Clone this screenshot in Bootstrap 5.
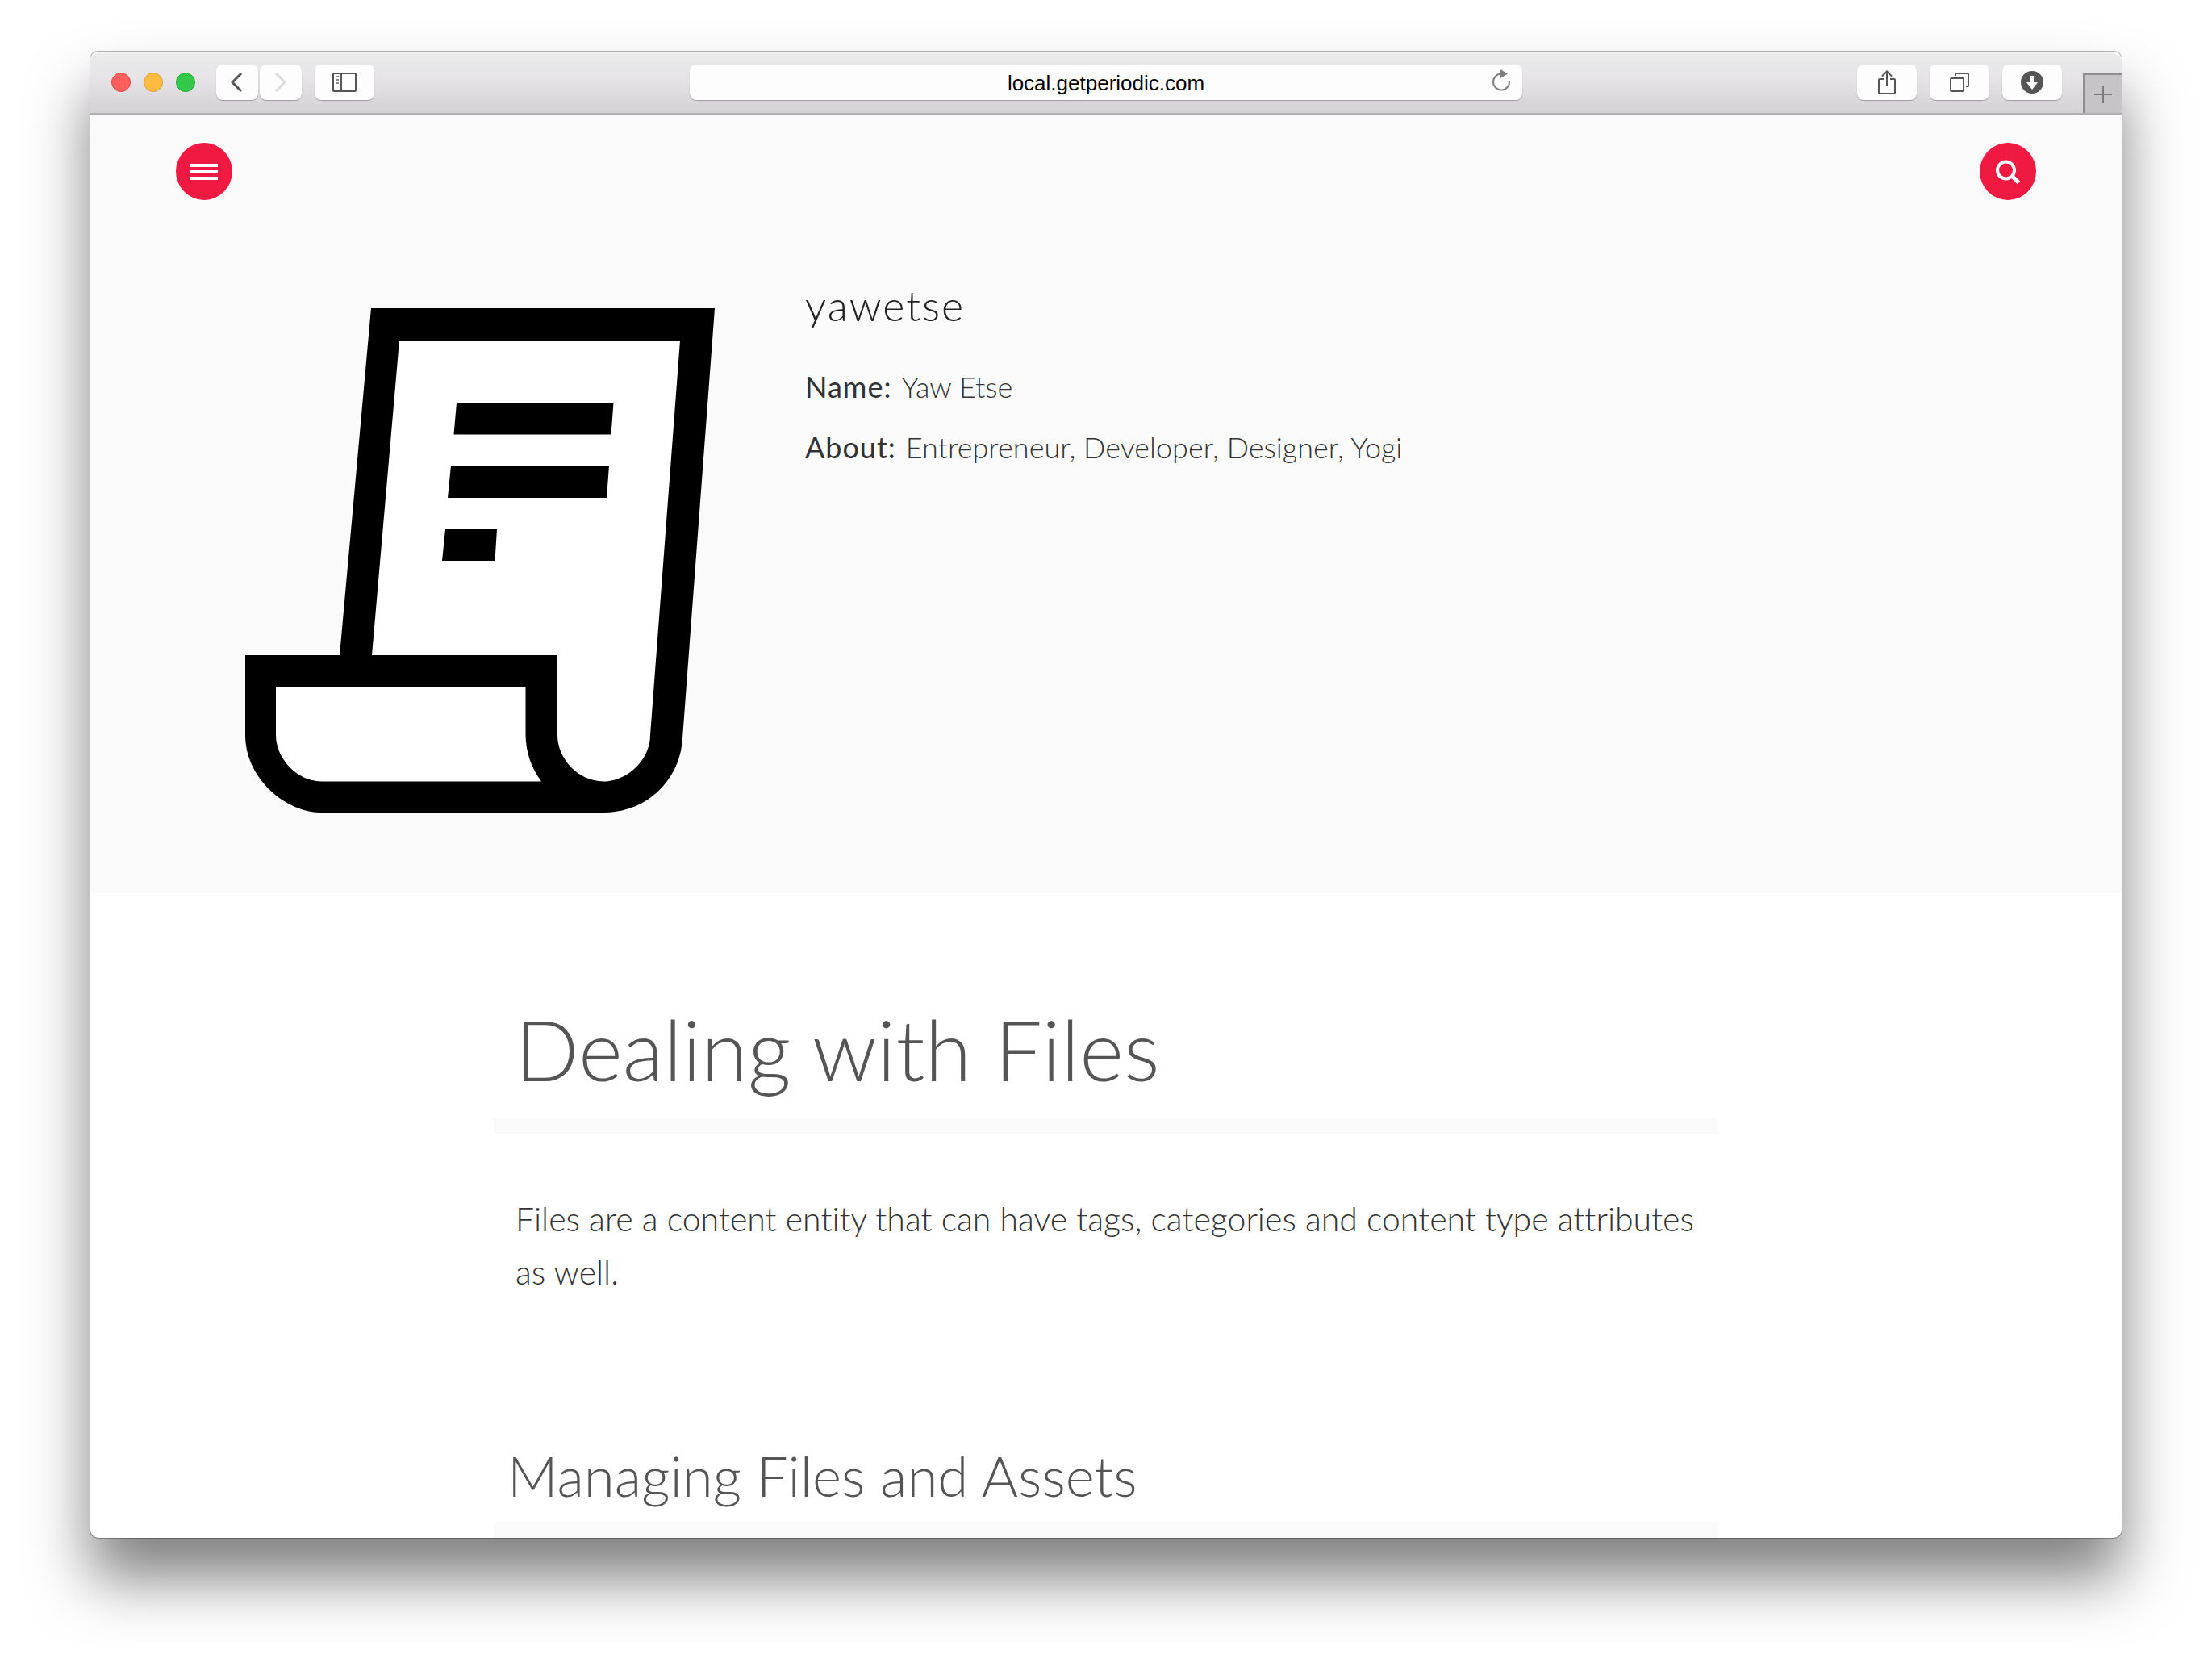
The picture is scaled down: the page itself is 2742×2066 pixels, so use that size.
<!DOCTYPE html>
<html lang="en">
<head>
<meta charset="utf-8">
<meta name="viewport" content="width=device-width, initial-scale=1">
<title>Dealing with Files</title>
<link href="https://cdn.jsdelivr.net/npm/bootstrap@5.3.0/dist/css/bootstrap.min.css" rel="stylesheet">
<style>
body { background: #fff; font-family: Lato, sans-serif; font-weight: 300; font-variant-ligatures: none; color: #333; padding: 64px 112px 160px; }
.browser { border-radius: 10px; box-shadow: 0 0 0 1px rgba(0,0,0,.3), 0 50px 75px rgba(0,0,0,.5); background: #fff; }
.toolbar { height: 78px; background: linear-gradient(#ececec, #e5e3e6 45%, #d4d2d5); border-bottom: 2px solid #b0aeb0; border-radius: 10px 10px 0 0; box-shadow: inset 0 2px 0 #f6f6f6; }
.toolside { flex: 1 1 0; height: 76px; }
.lights { gap: 16px; padding: 0 26px; }
.light { width: 24px; height: 24px; border-radius: 50%; border: 1px solid; }
.light-close { background: #fc605c; border-color: #df4744; }
.light-min { background: #fdbc40; border-color: #de9f34; }
.light-max { background: #34c84a; border-color: #27aa35; }
.tool { width: 74px; height: 44px; padding: 0; border: 0; border-radius: 8px; background: #fdfdfd; box-shadow: 0 1px 1px rgba(0,0,0,.28); display: flex; align-items: center; justify-content: center; }
.tool-narrow { width: 52px; }
.history { gap: 2px; }
.address { width: 41%; }
.address input { height: 44px; width: 100%; border: 0; border-radius: 8px; background: #fdfdfd; box-shadow: 0 1px 1px rgba(0,0,0,.28); text-align: center; color: #000; font: 26px/44px "Liberation Sans", Arial, sans-serif; padding: 2px 40px 0; }
.reload { position: absolute; right: 14px; top: 6px; border: 0; background: none; padding: 0; line-height: 0; }
.newtab { width: 48px; height: 49px; margin-left: 26px; padding: 0; border: solid #8f8d8f; border-width: 2px 0 0 2px; background: #c6c4c6; line-height: 0; }
.masthead { background: #fafafa; padding-bottom: 100px; }
.topnav { padding: 35px 106px 0; }
.round { width: 70px; height: 71px; border: 0; padding: 0; border-radius: 50%; background: #f01941; display: flex; align-items: center; justify-content: center; }
.profile { padding: 100px 106px 0 191px; gap: 112px; }
.avatar { width: 583px; flex: 0 0 auto; margin-top: 34px; }
.avatar svg { display: block; width: 100%; height: auto; }
.nick { font-size: 52px; line-height: 60px; font-weight: 300; letter-spacing: 2px; margin: 0 0 34px; color: #222; }
.fact { font-size: 36px; line-height: 75px; margin: 0; }
.fact dt { font-weight: 400; letter-spacing: 1px; margin-right: 12px; }
.fact dd { margin: 0; }
.article-col { max-width: 1518px; }
.title { font-size: 105px; line-height: 120px; font-weight: 300; color: #555; margin: 0; padding: 132px 26px 26px; border-bottom: 20px solid #fafafa; }
.copy { font-size: 41px; line-height: 66px; margin: 73px 0 177px; padding: 0 12px 0 27px; }
.subtitle { font-size: 69px; line-height: 84px; font-weight: 300; color: #555; margin: 0; padding: 0 17px 15px; border-bottom: 20px solid #fafafa; }
</style>
<script src="https://cdn.jsdelivr.net/npm/bootstrap@5.3.0/dist/js/bootstrap.bundle.min.js"></script>
</head>
<body>
<div class="browser">
  <div class="toolbar d-flex align-items-center">
    <div class="toolside d-flex align-items-center">
      <div class="lights d-flex">
        <span class="light light-close"></span><span class="light light-min"></span><span class="light light-max"></span>
      </div>
      <div class="history d-flex">
        <button class="tool tool-narrow" type="button" aria-label="Back"><svg width="16" height="26" viewBox="0 0 16 26" fill="none" stroke="#555" stroke-width="3"><path d="M13 2 2 13l11 11"/></svg></button>
        <button class="tool tool-narrow" type="button" aria-label="Forward"><svg width="16" height="26" viewBox="0 0 16 26" fill="none" stroke="#dadada" stroke-width="3"><path d="M2 2l11 11L2 24"/></svg></button>
      </div>
      <button class="tool ms-3" type="button" aria-label="Show sidebar"><svg width="30" height="24" viewBox="0 0 30 24" fill="none" stroke="#555" stroke-width="2"><rect x="1" y="1" width="28" height="22" rx="1"/><path d="M11 1v22"/><path stroke="#888" d="M4 5h4M4 9h4M4 13h4"/></svg></button>
    </div>
    <div class="address position-relative">
      <input type="text" value="local.getperiodic.com" aria-label="Address">
      <button class="reload" type="button" aria-label="Reload"><svg width="24" height="28" viewBox="0 0 24 28"><path d="M12 5.5A10 10 0 1 0 22 15" fill="none" stroke="#808080" stroke-width="2"/><path d="M11 0v11l9-5.500z" fill="#808080"/></svg></button>
    </div>
    <div class="toolside d-flex align-items-center justify-content-end">
      <div class="d-flex gap-3">
        <button class="tool" type="button" aria-label="Share"><svg width="24" height="32" viewBox="0 0 24 32" fill="none" stroke="#555" stroke-width="2"><path d="M8 12H3q-1 0-1 1v16q0 1 1 1h18q1 0 1-1V13q0-1-1-1h-5M12 21V3M6 8.500l6-6 6 6"/></svg></button>
        <button class="tool" type="button" aria-label="Show tabs"><svg width="26" height="26" viewBox="0 0 26 26" fill="none" stroke="#555" stroke-width="2"><rect x="2" y="8" width="16" height="16" rx="1"/><path d="M8 5V3q0-1 1-1h14q1 0 1 1v14q0 1-1 1h-2"/></svg></button>
        <button class="tool" type="button" aria-label="Downloads"><svg width="28" height="28" viewBox="0 0 28 28"><circle cx="14" cy="14" r="14" fill="#555"/><path d="M12 6h4v8h5l-7 9-7-9h5z" fill="#fff"/></svg></button>
      </div>
      <button class="newtab align-self-end" type="button" aria-label="New tab"><svg width="22" height="22" viewBox="0 0 22 22" stroke="#7c7a7c" stroke-width="2"><path d="M11 0v22M0 11h22"/></svg></button>
    </div>
  </div>
  <header class="masthead">
    <nav class="topnav d-flex justify-content-between">
      <button class="round" type="button" aria-label="Menu"><svg width="36" height="20" viewBox="0 0 36 20" fill="#fff"><path d="M0 0h35v4H0zM0 8h35v4H0zM0 16h35v4H0z"/></svg></button>
      <button class="round" type="button" aria-label="Search"><svg width="32" height="32" viewBox="0 0 32 32" fill="none" stroke="#fff" stroke-width="4"><circle cx="13.500" cy="14" r="10.500"/><path stroke-width="5" d="M21 21l8.500 8.500"/></svg></button>
    </nav>
    <div class="profile d-flex">
      <div class="avatar"><svg viewBox="303 382 583 625" role="img" aria-label="Scroll document">
        <path d="M460 382H886L846 915C844 962 806 1007 748 1007H396C350 1005 304 962 304 911V812H421z"/>
        <path fill="#fff" d="M495 422H843L806 911C806 940 780 968 748 968.500C716 968 691 940 691 911V812H461z"/>
        <path fill="#fff" d="M342 851.500H651.500V911C652 932 658 951 671 968.500H398C368 968 342 940 342 911z"/>
        <path d="M566 499H760.500L757.500 538.500H562.500zM559 577H755L752 617H555zM552 656H616L613.500 695H548z"/>
      </svg></div>
      <div>
        <h2 class="nick">yawetse</h2>
        <dl class="fact d-flex"><dt>Name:</dt><dd>Yaw Etse</dd></dl>
        <dl class="fact d-flex"><dt>About:</dt><dd>Entrepreneur, Developer, Designer, Yogi</dd></dl>
      </div>
    </div>
  </header>
  <main class="article-col mx-auto">
    <h1 class="title">Dealing with Files</h1>
    <p class="copy">Files are a content entity that can have tags, categories and content type attributes as well.</p>
    <h2 class="subtitle">Managing Files and Assets</h2>
  </main>
</div>
</body>
</html>
